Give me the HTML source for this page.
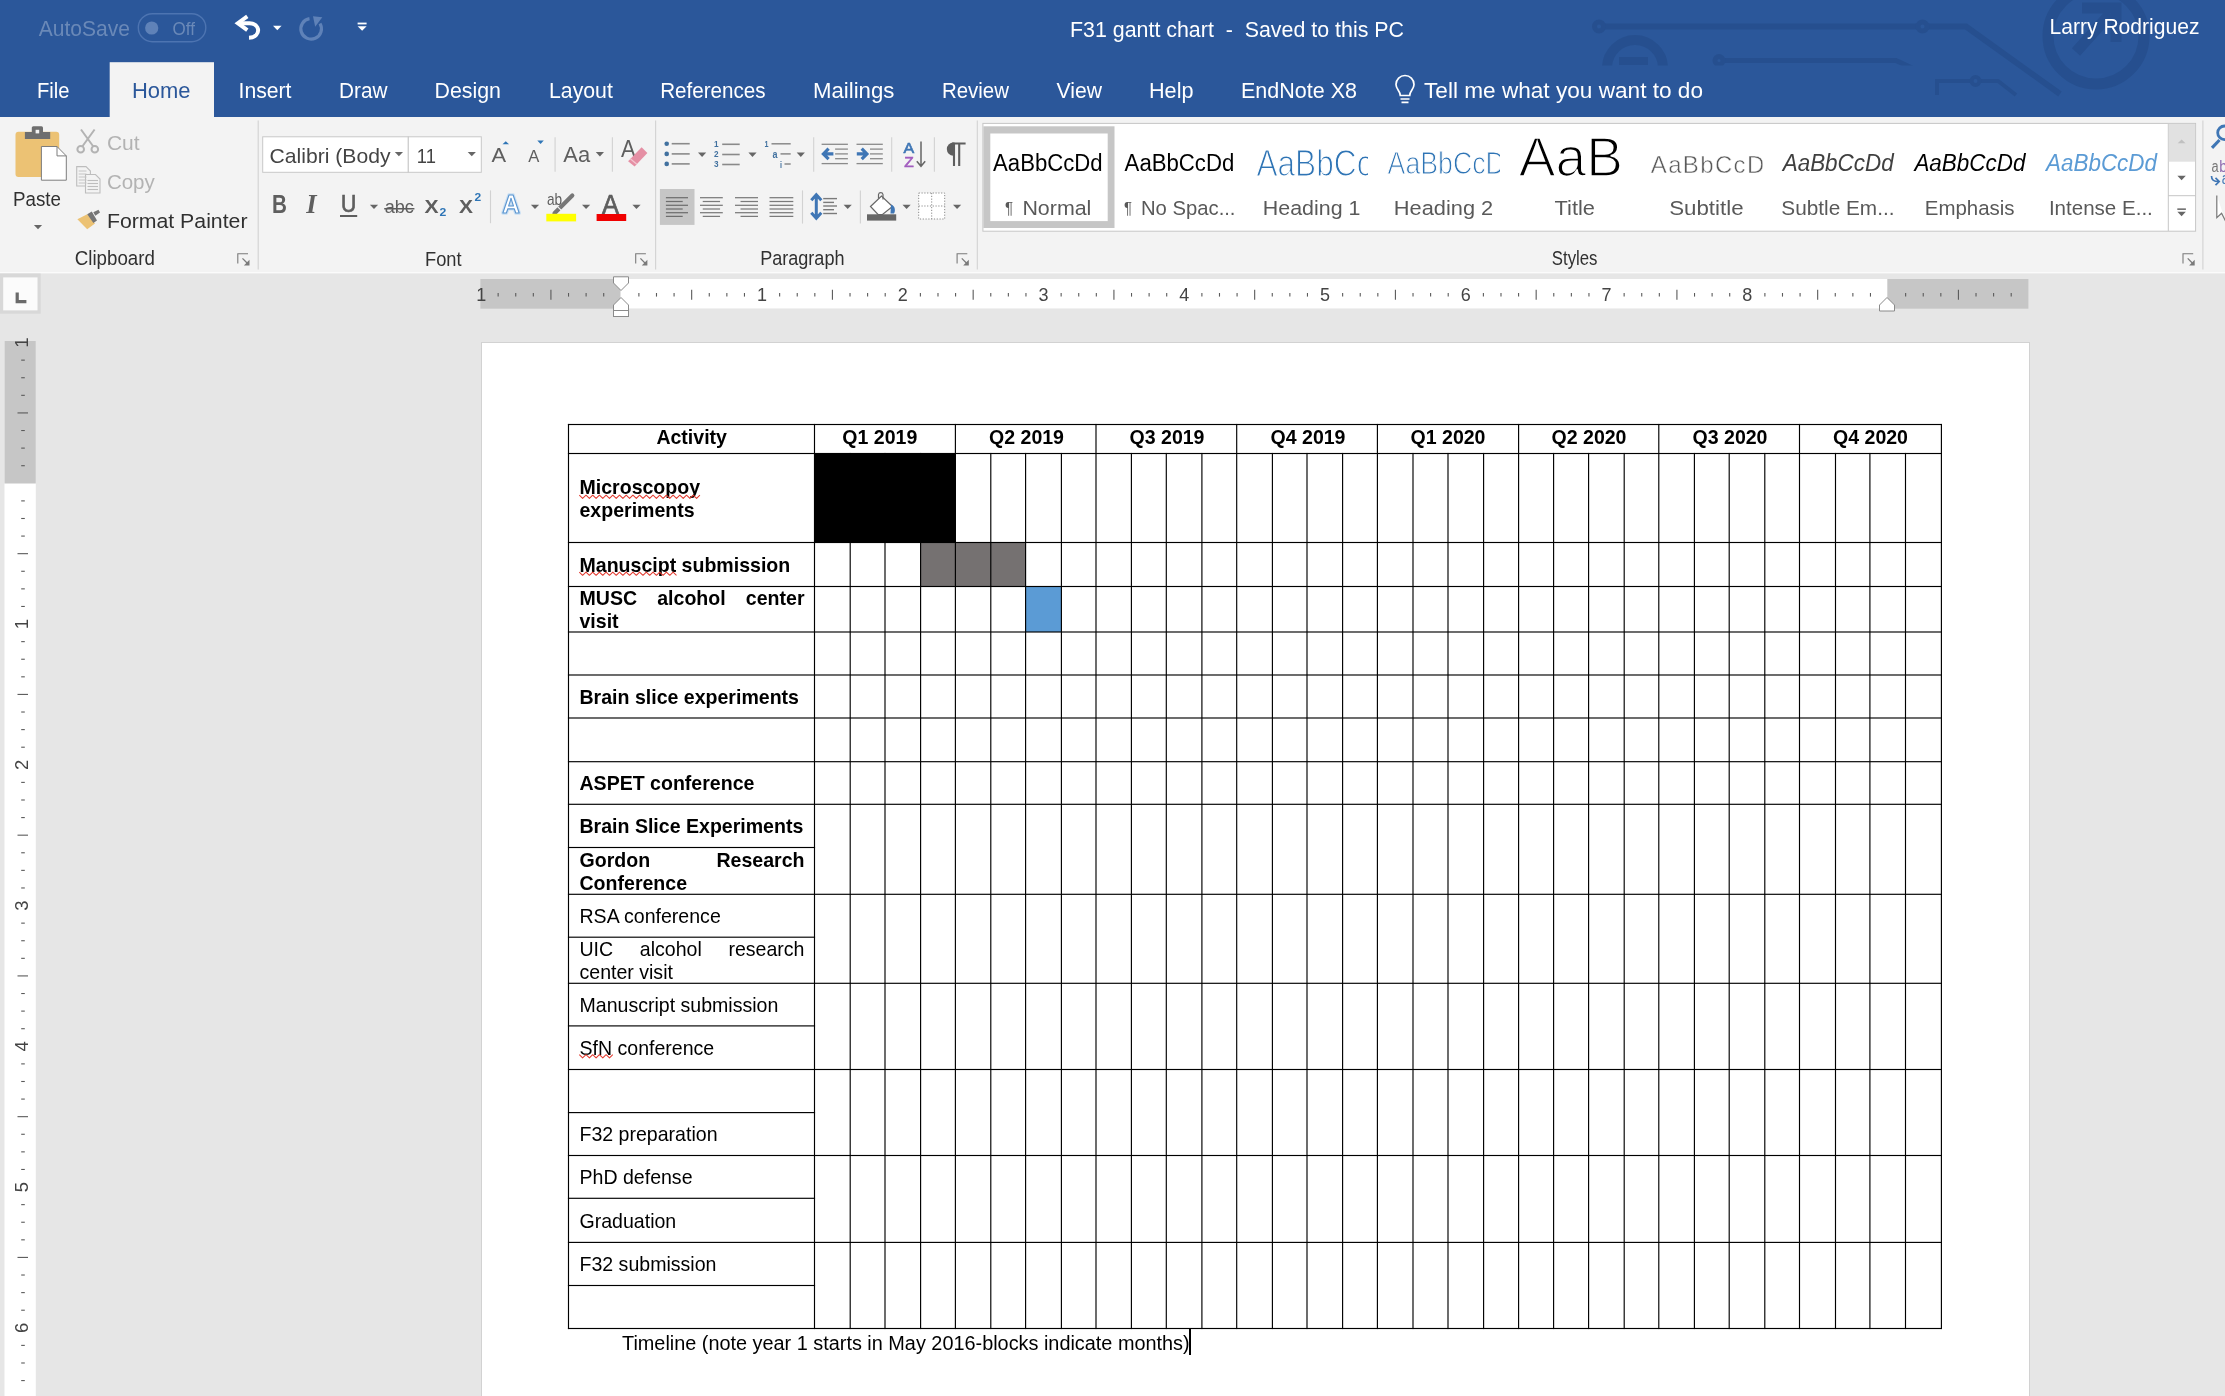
<!DOCTYPE html>
<html><head><meta charset="utf-8"><title>F31 gantt chart - Word</title><style>
html,body{margin:0;padding:0}
body{width:2225px;height:1396px;overflow:hidden;position:relative;background:#e6e6e6;font-family:"Liberation Sans",sans-serif}
#root{position:absolute;left:0;top:0;width:2225px;height:1396px;will-change:transform}
svg{position:absolute;left:0;top:0}
svg text{font-family:"Liberation Sans",sans-serif}
.tx{position:absolute;font-size:19.56px;line-height:22.5px;white-space:nowrap;color:#000}
.b{font-weight:bold}
.cell{position:absolute;left:579.5px;width:225px;display:flex;align-items:center}
.tx2{font-size:19.56px;line-height:22.5px;color:#000;text-align:justify;width:225px}
.sq{}
</style></head>
<body>
<div id="root">
<div style="position:absolute;left:481px;top:342px;width:1548.5px;height:1060px;background:#fff;border:1px solid #d2d2d2;box-sizing:border-box"></div>
<div class="tx b" style="left:591.7px;top:425.7px;width:200px;text-align:center">Activity</div>
<div class="tx b" style="left:779.8px;top:425.7px;width:200px;text-align:center">Q1 2019</div>
<div class="tx b" style="left:926.5px;top:425.7px;width:200px;text-align:center">Q2 2019</div>
<div class="tx b" style="left:1067.0px;top:425.7px;width:200px;text-align:center">Q3 2019</div>
<div class="tx b" style="left:1208.0px;top:425.7px;width:200px;text-align:center">Q4 2019</div>
<div class="tx b" style="left:1348.0px;top:425.7px;width:200px;text-align:center">Q1 2020</div>
<div class="tx b" style="left:1489.0px;top:425.7px;width:200px;text-align:center">Q2 2020</div>
<div class="tx b" style="left:1630.0px;top:425.7px;width:200px;text-align:center">Q3 2020</div>
<div class="tx b" style="left:1770.5px;top:425.7px;width:200px;text-align:center">Q4 2020</div>
<div class="cell" style="top:454.7px;height:88.0px"><div class="tx2 b">Microscopoy<br> experiments</div></div>
<div class="cell" style="top:543.7px;height:43.0px"><div class="tx2 b">Manuscipt submission</div></div>
<div class="cell" style="top:587.7px;height:44.5px"><div class="tx2 b">MUSC alcohol center visit</div></div>
<div class="cell" style="top:676.2px;height:42.0px"><div class="tx2 b">Brain slice experiments</div></div>
<div class="cell" style="top:762.9px;height:41.6px"><div class="tx2 b">ASPET conference</div></div>
<div class="cell" style="top:805.5px;height:42.2px"><div class="tx2 b">Brain Slice Experiments</div></div>
<div class="cell" style="top:848.7px;height:45.8px"><div class="tx2 b">Gordon Research Conference</div></div>
<div class="cell" style="top:895.5px;height:41.9px"><div class="tx2">RSA conference</div></div>
<div class="cell" style="top:938.4px;height:45.1px"><div class="tx2">UIC alcohol research center visit</div></div>
<div class="cell" style="top:984.5px;height:41.6px"><div class="tx2">Manuscript submission</div></div>
<div class="cell" style="top:1027.1px;height:42.6px"><div class="tx2">SfN conference</div></div>
<div class="cell" style="top:1113.8px;height:41.9px"><div class="tx2">F32 preparation</div></div>
<div class="cell" style="top:1156.7px;height:41.8px"><div class="tx2">PhD defense</div></div>
<div class="cell" style="top:1199.5px;height:43.1px"><div class="tx2">Graduation</div></div>
<div class="cell" style="top:1243.6px;height:42.1px"><div class="tx2">F32 submission</div></div>
<div id="cap" style="position:absolute;left:621.5px;top:1333.8px;font-size:19.4px;line-height:1;white-space:nowrap;transform-origin:0 0;transform:scaleX(1.024);color:#000">Timeline (note year 1 starts in May 2016-blocks indicate months)</div>
<div style="position:absolute;left:1189px;top:1329px;width:1.6px;height:26px;background:#000"></div>
<svg width="2225" height="1396" viewBox="0 0 2225 1396">
<rect x="0.00" y="0.00" width="2225.00" height="117.00" fill="#2b579a"/>
<g fill="none" stroke="#264f8e" stroke-width="5" opacity="0.9">
<clipPath id="c1"><rect x="1580" y="0" width="400" height="65.5"/></clipPath>
<path d="M1603 26.5H1918M1927 26.5H1966L2060 94" stroke-width="6"/>
<circle cx="1599" cy="26.5" r="4.5"/><circle cx="1922.5" cy="26.5" r="4.5"/>
<g clip-path="url(#c1)"><circle cx="1635" cy="68" r="28" stroke-width="10"/><path d="M1619 61H1648" stroke-width="8"/>
<path d="M1723 60.5H1896L1912 68"/><circle cx="1719" cy="60.5" r="4"/></g>
<path d="M1937 95V81H1971M1980 81H1998L2016 95" stroke-width="4"/><circle cx="1975.5" cy="81" r="4" stroke-width="4"/>
<clipPath id="c2"><rect x="2030" y="0" width="140" height="117"/></clipPath>
<g clip-path="url(#c2)"><circle cx="2096" cy="36" r="48" stroke-width="11"/>
<path d="M2076 52L2110 14M2082 8H2116V42" stroke-width="11"/></g>
</g>
<text x="38.7" y="36.0" font-size="21.5" textLength="91.2" lengthAdjust="spacingAndGlyphs" fill="#6a89b8">AutoSave</text>
<rect x="138.3" y="13.7" width="67.5" height="28" rx="14" fill="none" stroke="#4d74b1" stroke-width="1.4"/>
<circle cx="151.7" cy="28" r="6.6" fill="#5f82b8"/>
<text x="172.6" y="34.6" font-size="18.5" textLength="22.4" lengthAdjust="spacingAndGlyphs" fill="#6a89b8">Off</text>
<g fill="none" stroke="#fff" stroke-width="3.9" stroke-linecap="butt" stroke-linejoin="miter"><path d="M247.300 16.300L237.800 23.200L247.300 30.100"/><path d="M240 23.200H249.500C257.500 23.200 260.200 30.500 256.200 35C254.300 37 251.500 37.700 249 37.800"/></g>
<path d="M273.00 25.65h8.6l-4.30 4.5z" fill="#fff"/>
<g fill="none" stroke="#5f82b8" stroke-width="3.2"><path d="M309.500 18.600A10.300 10.300 0 1 0 320 23.500"/></g>
<path d="M313 16.200L322.300 17.300L315.200 26.800Z" fill="#5f82b8"/>
<rect x="357.60" y="22.60" width="9.00" height="1.80" fill="#fff"/>
<path d="M357.60 26.20h9l-4.50 4.6z" fill="#fff"/>
<text x="1070.0" y="37.3" font-size="22" textLength="334.0" lengthAdjust="spacingAndGlyphs" fill="#fff">F31 gantt chart  -  Saved to this PC</text>
<text x="2049.5" y="33.8" font-size="22" textLength="150.0" lengthAdjust="spacingAndGlyphs" fill="#fff">Larry Rodriguez</text>
<rect x="109.70" y="62.20" width="104.30" height="56.00" fill="#f3f3f3"/>
<text x="37.0" y="97.8" font-size="22" textLength="32.5" lengthAdjust="spacingAndGlyphs" fill="#fff">File</text>
<text x="132.0" y="97.8" font-size="22" textLength="58.5" lengthAdjust="spacingAndGlyphs" fill="#2b579a">Home</text>
<text x="238.5" y="97.8" font-size="22" textLength="53.0" lengthAdjust="spacingAndGlyphs" fill="#fff">Insert</text>
<text x="339.0" y="97.8" font-size="22" textLength="48.5" lengthAdjust="spacingAndGlyphs" fill="#fff">Draw</text>
<text x="434.5" y="97.8" font-size="22" textLength="66.5" lengthAdjust="spacingAndGlyphs" fill="#fff">Design</text>
<text x="549.0" y="97.8" font-size="22" textLength="63.8" lengthAdjust="spacingAndGlyphs" fill="#fff">Layout</text>
<text x="660.2" y="97.8" font-size="22" textLength="105.4" lengthAdjust="spacingAndGlyphs" fill="#fff">References</text>
<text x="813.0" y="97.8" font-size="22" textLength="81.4" lengthAdjust="spacingAndGlyphs" fill="#fff">Mailings</text>
<text x="942.0" y="97.8" font-size="22" textLength="67.0" lengthAdjust="spacingAndGlyphs" fill="#fff">Review</text>
<text x="1056.5" y="97.8" font-size="22" textLength="45.5" lengthAdjust="spacingAndGlyphs" fill="#fff">View</text>
<text x="1149.0" y="97.8" font-size="22" textLength="44.5" lengthAdjust="spacingAndGlyphs" fill="#fff">Help</text>
<text x="1241.0" y="97.8" font-size="22" textLength="116.0" lengthAdjust="spacingAndGlyphs" fill="#fff">EndNote X8</text>
<text x="1424.0" y="97.8" font-size="22" textLength="279.0" lengthAdjust="spacingAndGlyphs" fill="#fff">Tell me what you want to do</text>
<g fill="none" stroke="#fff" stroke-width="1.7"><path d="M1400.3 95.5C1400.3 91 1396 89.5 1396 84.5A9 9 0 0 1 1414 84.500C1414 89.5 1409.700 91 1409.700 95.5Z"/><path d="M1400.5 99H1409.5M1401.500 102.300H1408.500"/></g>
<rect x="0.00" y="117.00" width="2225.00" height="156.30" fill="#f3f3f3"/>
<rect x="0.00" y="272.00" width="2225.00" height="1.20" fill="#fbfbfb"/>
<line x1="258.20" y1="120.60" x2="258.20" y2="269.50" stroke="#d2d2d2" stroke-width="1.1"/>
<line x1="655.60" y1="120.60" x2="655.60" y2="269.50" stroke="#d2d2d2" stroke-width="1.1"/>
<line x1="977.30" y1="120.60" x2="977.30" y2="269.50" stroke="#d2d2d2" stroke-width="1.1"/>
<line x1="2202.90" y1="120.60" x2="2202.90" y2="269.50" stroke="#d2d2d2" stroke-width="1.1"/>
<rect x="15.5" y="131.8" width="43.7" height="45.2" rx="3" fill="#ecc274"/>
<rect x="24.90" y="132.00" width="25.30" height="7.00" fill="#6e6e6e"/>
<rect x="31.8" y="126.2" width="11.2" height="8" rx="1.5" fill="#6e6e6e"/>
<rect x="35.60" y="129.80" width="3.60" height="3.60" fill="#f3f3f3"/>
<path d="M41.4 146.5H57L66.3 155.9V180.2H41.4Z" fill="#fff" stroke="#7d7d7d" stroke-width="1"/>
<path d="M57 146.5V155.9H66.3" fill="none" stroke="#7d7d7d" stroke-width="1"/>
<text x="13.1" y="206.2" font-size="20.5" textLength="47.9" lengthAdjust="spacingAndGlyphs" fill="#303030">Paste</text>
<path d="M33.90 224.90h8.2l-4.10 4.4z" fill="#666"/>
<g fill="none" stroke="#b3b3b3" stroke-width="2"><path d="M81 129.5L93.3 146.5M94.600 129.5L82.300 146.500"/><circle cx="80.7" cy="149.300" r="3.3"/><circle cx="94.8" cy="149.300" r="3.3"/></g>
<text x="106.9" y="149.5" font-size="20.5" textLength="32.7" lengthAdjust="spacingAndGlyphs" fill="#b3b3b3">Cut</text>
<g fill="#f3f3f3" stroke="#bdbdbd" stroke-width="1.1"><path d="M76.700 166.600H86L90.400 171V186H76.700Z"/><path d="M85.5 174.500H95.5L100 179V193H85.500Z"/></g>
<line x1="78.70" y1="171.00" x2="86.50" y2="171.00" stroke="#c4c4c4" stroke-width="1"/><line x1="78.70" y1="174.00" x2="86.50" y2="174.00" stroke="#c4c4c4" stroke-width="1"/><line x1="78.70" y1="177.00" x2="86.50" y2="177.00" stroke="#c4c4c4" stroke-width="1"/><line x1="78.70" y1="180.00" x2="86.50" y2="180.00" stroke="#c4c4c4" stroke-width="1"/><line x1="78.70" y1="183.00" x2="86.50" y2="183.00" stroke="#c4c4c4" stroke-width="1"/>
<line x1="87.50" y1="180.50" x2="98.00" y2="180.50" stroke="#bdbdbd" stroke-width="1.1"/><line x1="87.50" y1="183.50" x2="98.00" y2="183.50" stroke="#bdbdbd" stroke-width="1.1"/><line x1="87.50" y1="186.50" x2="98.00" y2="186.50" stroke="#bdbdbd" stroke-width="1.1"/><line x1="87.50" y1="189.50" x2="98.00" y2="189.50" stroke="#bdbdbd" stroke-width="1.1"/>
<text x="106.9" y="188.7" font-size="20.5" textLength="47.9" lengthAdjust="spacingAndGlyphs" fill="#b3b3b3">Copy</text>
<path d="M77.4 219.3L87.2 214.2L95 223.6L87.2 229.2Z" fill="#ecc274"/>
<path d="M87.2 214.2L91.8 211.6L97 220.4L93.4 223Z" fill="#757575"/>
<path d="M93.300 212.300L98.500 209.800L100 212.500L95.300 215.700Z" fill="#757575"/>
<text x="106.9" y="227.8" font-size="20.5" textLength="140.6" lengthAdjust="spacingAndGlyphs" fill="#303030">Format Painter</text>
<text x="74.8" y="265.2" font-size="20.5" textLength="80.0" lengthAdjust="spacingAndGlyphs" fill="#303030">Clipboard</text>
<g fill="none" stroke="#7a7a7a" stroke-width="1.1"><path d="M237.8 263.5V253.7H248.0"/><path d="M242.5 258.4L247.3 263.2" stroke-width="1.3"/></g><path d="M249.5 259.8V265.4H243.9Z" fill="#7a7a7a"/>
<rect x="262.7" y="136.8" width="145.6" height="35.5" fill="#fff" stroke="#c8c8c8" stroke-width="1"/>
<rect x="408.3" y="136.8" width="73" height="35.5" fill="#fff" stroke="#c8c8c8" stroke-width="1"/>
<text x="269.6" y="163.0" font-size="20.8" textLength="120.9" lengthAdjust="spacingAndGlyphs" fill="#444">Calibri (Body</text>
<path d="M394.80 151.90h8.2l-4.10 4.4z" fill="#666"/>
<text x="416.8" y="163.0" font-size="20.8" textLength="19.1" lengthAdjust="spacingAndGlyphs" fill="#444">11</text>
<path d="M467.70 151.90h8.2l-4.10 4.4z" fill="#666"/>
<text x="491.4" y="162.4" font-size="21" textLength="14.6" lengthAdjust="spacingAndGlyphs" fill="#5e5e5e">A</text>
<path d="M502.5 144.3L505.75 141.2L509 144.3Z" fill="#2e75b6"/>
<text x="528.2" y="162.4" font-size="15.6" textLength="11.1" lengthAdjust="spacingAndGlyphs" fill="#5e5e5e">A</text>
<path d="M537.3 140.6H543.800L540.55 143.9Z" fill="#2e75b6"/>
<line x1="555.10" y1="137.30" x2="555.10" y2="171.70" stroke="#d2d2d2" stroke-width="1.1"/>
<text x="563.3" y="161.5" font-size="22" textLength="26.9" lengthAdjust="spacingAndGlyphs" fill="#5e5e5e">Aa</text>
<path d="M595.80 152.10h8.2l-4.10 4.4z" fill="#666"/>
<line x1="612.40" y1="137.30" x2="612.40" y2="171.70" stroke="#d2d2d2" stroke-width="1.1"/>
<text x="621.1" y="156.5" font-size="23.5" textLength="14.6" lengthAdjust="spacingAndGlyphs" fill="#5e5e5e">A</text>
<path d="M628.1 161.2L641.6 147.2L647.4 153L634.6 166.5Z" fill="#e58fa4"/>
<line x1="630.30" y1="158.80" x2="636.80" y2="164.30" stroke="#f3c6d0" stroke-width="1.2"/>
<text x="271.9" y="213.2" font-size="25.3" textLength="14.9" lengthAdjust="spacingAndGlyphs" fill="#5e5e5e" font-weight="bold">B</text>
<text x="306.3" y="213.2" font-size="26.5" fill="#5e5e5e" font-weight="bold" font-style="italic" style="font-family:&quot;Liberation Serif&quot;">I</text>
<text x="340.9" y="212.4" font-size="24" textLength="15.3" lengthAdjust="spacingAndGlyphs" fill="#5e5e5e" stroke="#5e5e5e" stroke-width="0.7">U</text>
<rect x="340.00" y="215.00" width="17.20" height="2.00" fill="#5e5e5e"/>
<path d="M369.90 204.70h8.2l-4.10 4.4z" fill="#666"/>
<text x="384.7" y="213.2" font-size="18" textLength="29.2" lengthAdjust="spacingAndGlyphs" fill="#5e5e5e">abc</text>
<rect x="384.20" y="208.00" width="30.20" height="1.50" fill="#5e5e5e"/>
<text x="424.4" y="213.2" font-size="19" textLength="14.1" lengthAdjust="spacingAndGlyphs" fill="#5e5e5e" font-weight="bold">X</text>
<text x="439.6" y="215.9" font-size="11.5" textLength="6.8" lengthAdjust="spacingAndGlyphs" fill="#2e75b6" font-weight="bold">2</text>
<text x="458.9" y="213.2" font-size="19" textLength="14.0" lengthAdjust="spacingAndGlyphs" fill="#5e5e5e" font-weight="bold">X</text>
<text x="474.4" y="200.6" font-size="11.5" textLength="6.7" lengthAdjust="spacingAndGlyphs" fill="#2e75b6" font-weight="bold">2</text>
<line x1="490.50" y1="190.40" x2="490.50" y2="223.20" stroke="#d2d2d2" stroke-width="1.1"/>
<text x="502.2" y="213" font-size="26" font-weight="bold" textLength="17.600" lengthAdjust="spacingAndGlyphs" fill="#fff" stroke="#c9dff3" stroke-width="3.6" stroke-linejoin="round">A</text>
<text x="502.2" y="213" font-size="26" font-weight="bold" textLength="17.600" lengthAdjust="spacingAndGlyphs" fill="#fff" stroke="#5b95d0" stroke-width="1.15" stroke-linejoin="round">A</text>
<path d="M530.90 204.70h8.2l-4.10 4.4z" fill="#666"/>
<text x="546.9" y="204.5" font-size="17" textLength="15.2" lengthAdjust="spacingAndGlyphs" fill="#5e5e5e">ab</text>
<line x1="572.30" y1="195.40" x2="554.50" y2="213.20" stroke="#777" stroke-width="4.2" stroke-linecap="round"/>
<line x1="556.60" y1="205.70" x2="562.00" y2="211.10" stroke="#f3f3f3" stroke-width="1.2"/>
<rect x="546.30" y="213.80" width="29.80" height="7.60" fill="#ffff00"/>
<path d="M582.00 204.70h8.2l-4.10 4.4z" fill="#666"/>
<text x="602.1" y="214.4" font-size="27" textLength="17.0" lengthAdjust="spacingAndGlyphs" fill="#5e5e5e" stroke="#5e5e5e" stroke-width="0.7">A</text>
<rect x="596.60" y="214.00" width="29.60" height="7.00" fill="#f00000"/>
<path d="M632.40 204.70h8.2l-4.10 4.4z" fill="#666"/>
<text x="425.0" y="265.5" font-size="20.5" textLength="36.6" lengthAdjust="spacingAndGlyphs" fill="#303030">Font</text>
<g fill="none" stroke="#7a7a7a" stroke-width="1.1"><path d="M635.7 263.5V253.7H645.9000000000001"/><path d="M640.4000000000001 258.4L645.2 263.2" stroke-width="1.3"/></g><path d="M647.4000000000001 259.8V265.4H641.8000000000001Z" fill="#7a7a7a"/>
<circle cx="666.7" cy="143.7" r="2.3" fill="#41719f"/>
<circle cx="666.7" cy="153.9" r="2.3" fill="#41719f"/>
<circle cx="666.7" cy="163.9" r="2.3" fill="#41719f"/>
<line x1="671.70" y1="143.70" x2="689.70" y2="143.70" stroke="#8a8a8a" stroke-width="1.6"/><line x1="671.70" y1="153.90" x2="689.70" y2="153.90" stroke="#8a8a8a" stroke-width="1.6"/><line x1="671.70" y1="163.90" x2="689.70" y2="163.90" stroke="#8a8a8a" stroke-width="1.6"/>
<path d="M698.00 152.60h8.2l-4.10 4.4z" fill="#666"/>
<text x="714.0" y="146.9" font-size="8.2" fill="#41719f" font-weight="bold">1</text>
<text x="714.0" y="157.2" font-size="8.2" fill="#41719f" font-weight="bold">2</text>
<text x="714.0" y="167.3" font-size="8.2" fill="#41719f" font-weight="bold">3</text>
<line x1="722.20" y1="144.30" x2="739.70" y2="144.30" stroke="#8a8a8a" stroke-width="1.6"/><line x1="722.20" y1="154.50" x2="739.70" y2="154.50" stroke="#8a8a8a" stroke-width="1.6"/><line x1="722.20" y1="164.50" x2="739.70" y2="164.50" stroke="#8a8a8a" stroke-width="1.6"/>
<path d="M748.40 152.60h8.2l-4.10 4.4z" fill="#666"/>
<text x="764.5" y="146.8" font-size="9.5" textLength="4.0" lengthAdjust="spacingAndGlyphs" fill="#41719f" font-weight="bold">1</text>
<text x="772.5" y="157.5" font-size="10.5" textLength="5.0" lengthAdjust="spacingAndGlyphs" fill="#41719f" font-weight="bold">a</text>
<text x="780.0" y="167.5" font-size="9.5" textLength="2.0" lengthAdjust="spacingAndGlyphs" fill="#41719f" font-weight="bold">i</text>
<line x1="771.50" y1="143.80" x2="790.70" y2="143.80" stroke="#8a8a8a" stroke-width="1.5"/>
<line x1="780.50" y1="153.90" x2="790.70" y2="153.90" stroke="#8a8a8a" stroke-width="1.5"/>
<line x1="784.50" y1="164.00" x2="790.70" y2="164.00" stroke="#8a8a8a" stroke-width="1.5"/>
<path d="M796.70 152.60h8.2l-4.10 4.4z" fill="#666"/>
<line x1="813.70" y1="137.30" x2="813.70" y2="171.70" stroke="#d2d2d2" stroke-width="1.1"/>
<line x1="821.60" y1="144.30" x2="847.90" y2="144.30" stroke="#8a8a8a" stroke-width="1.3"/><line x1="821.60" y1="163.60" x2="847.90" y2="163.60" stroke="#8a8a8a" stroke-width="1.3"/><line x1="835.10" y1="149.10" x2="847.90" y2="149.10" stroke="#8a8a8a" stroke-width="1.3"/><line x1="835.10" y1="153.90" x2="847.90" y2="153.90" stroke="#8a8a8a" stroke-width="1.3"/><line x1="835.10" y1="158.70" x2="847.90" y2="158.70" stroke="#8a8a8a" stroke-width="1.3"/><path d="M833.4 153.9H824.6M828.6 148.6L823.4 153.9L828.6 159.2" fill="none" stroke="#3f76b5" stroke-width="3.2"/>
<line x1="856.50" y1="144.30" x2="882.80" y2="144.30" stroke="#8a8a8a" stroke-width="1.3"/><line x1="856.50" y1="163.60" x2="882.80" y2="163.60" stroke="#8a8a8a" stroke-width="1.3"/><line x1="870.00" y1="149.10" x2="882.80" y2="149.10" stroke="#8a8a8a" stroke-width="1.3"/><line x1="870.00" y1="153.90" x2="882.80" y2="153.90" stroke="#8a8a8a" stroke-width="1.3"/><line x1="870.00" y1="158.70" x2="882.80" y2="158.70" stroke="#8a8a8a" stroke-width="1.3"/><path d="M856.8 153.9H865.7M861.7 148.6L866.9 153.9L861.7 159.2" fill="none" stroke="#3f76b5" stroke-width="3.2"/>
<line x1="891.70" y1="137.30" x2="891.70" y2="171.70" stroke="#d2d2d2" stroke-width="1.1"/>
<text x="903.6" y="153.0" font-size="15" textLength="10.7" lengthAdjust="spacingAndGlyphs" fill="#3f76b5" stroke="#3f76b5" stroke-width="0.6">A</text>
<text x="904.3" y="166.5" font-size="15" textLength="9.5" lengthAdjust="spacingAndGlyphs" fill="#a25cbf" stroke="#a25cbf" stroke-width="0.6">Z</text>
<path d="M921 141.5V166M916.8 161.3L921 166.3L925.200 161.300" fill="none" stroke="#666" stroke-width="1.5"/>
<line x1="934.40" y1="137.30" x2="934.40" y2="171.70" stroke="#d2d2d2" stroke-width="1.1"/>
<path d="M952 143.500H965.600M954 143V166M959.200 143V166" fill="none" stroke="#5e5e5e" stroke-width="2.1"/>
<path d="M954.5 142.5H953.300A6.500 6.600 0 0 0 953.300 155.700H954.500Z" fill="#5e5e5e"/>
<rect x="659.90" y="189.00" width="34.60" height="35.90" fill="#c6c6c6"/>
<line x1="665.90" y1="197.70" x2="688.00" y2="197.70" stroke="#6e6e6e" stroke-width="1.25"/><line x1="665.90" y1="201.50" x2="682.70" y2="201.50" stroke="#6e6e6e" stroke-width="1.25"/><line x1="665.90" y1="205.30" x2="688.00" y2="205.30" stroke="#6e6e6e" stroke-width="1.25"/><line x1="665.90" y1="209.00" x2="682.70" y2="209.00" stroke="#6e6e6e" stroke-width="1.25"/><line x1="665.90" y1="212.70" x2="688.00" y2="212.70" stroke="#6e6e6e" stroke-width="1.25"/><line x1="665.90" y1="216.40" x2="682.70" y2="216.40" stroke="#6e6e6e" stroke-width="1.25"/>
<line x1="700.00" y1="197.70" x2="722.80" y2="197.70" stroke="#7a7a7a" stroke-width="1.25"/><line x1="702.74" y1="201.50" x2="720.06" y2="201.50" stroke="#7a7a7a" stroke-width="1.25"/><line x1="700.00" y1="205.30" x2="722.80" y2="205.30" stroke="#7a7a7a" stroke-width="1.25"/><line x1="702.74" y1="209.00" x2="720.06" y2="209.00" stroke="#7a7a7a" stroke-width="1.25"/><line x1="700.00" y1="212.70" x2="722.80" y2="212.70" stroke="#7a7a7a" stroke-width="1.25"/><line x1="702.74" y1="216.40" x2="720.06" y2="216.40" stroke="#7a7a7a" stroke-width="1.25"/>
<line x1="735.00" y1="197.70" x2="758.00" y2="197.70" stroke="#7a7a7a" stroke-width="1.25"/><line x1="740.52" y1="201.50" x2="758.00" y2="201.50" stroke="#7a7a7a" stroke-width="1.25"/><line x1="735.00" y1="205.30" x2="758.00" y2="205.30" stroke="#7a7a7a" stroke-width="1.25"/><line x1="740.52" y1="209.00" x2="758.00" y2="209.00" stroke="#7a7a7a" stroke-width="1.25"/><line x1="735.00" y1="212.70" x2="758.00" y2="212.70" stroke="#7a7a7a" stroke-width="1.25"/><line x1="740.52" y1="216.40" x2="758.00" y2="216.40" stroke="#7a7a7a" stroke-width="1.25"/>
<line x1="769.50" y1="197.70" x2="793.30" y2="197.70" stroke="#7a7a7a" stroke-width="1.25"/><line x1="769.50" y1="201.50" x2="793.30" y2="201.50" stroke="#7a7a7a" stroke-width="1.25"/><line x1="769.50" y1="205.30" x2="793.30" y2="205.30" stroke="#7a7a7a" stroke-width="1.25"/><line x1="769.50" y1="209.00" x2="793.30" y2="209.00" stroke="#7a7a7a" stroke-width="1.25"/><line x1="769.50" y1="212.70" x2="793.30" y2="212.70" stroke="#7a7a7a" stroke-width="1.25"/><line x1="769.50" y1="216.40" x2="793.30" y2="216.40" stroke="#7a7a7a" stroke-width="1.25"/>
<line x1="802.50" y1="190.40" x2="802.50" y2="223.60" stroke="#d2d2d2" stroke-width="1.1"/>
<path d="M816.300 196V217M811.300 200.300L816.300 194.800L821.300 200.300M811.300 212.800L816.300 218.300L821.300 212.800" fill="none" stroke="#3f76b5" stroke-width="3"/>
<line x1="823.20" y1="198.60" x2="837.00" y2="198.60" stroke="#7a7a7a" stroke-width="1.4"/><line x1="823.20" y1="206.00" x2="837.00" y2="206.00" stroke="#7a7a7a" stroke-width="1.4"/><line x1="823.20" y1="213.50" x2="837.00" y2="213.50" stroke="#7a7a7a" stroke-width="1.4"/>
<line x1="823.20" y1="202.40" x2="834.00" y2="202.40" stroke="#7a7a7a" stroke-width="1.4"/><line x1="823.20" y1="209.70" x2="834.00" y2="209.70" stroke="#7a7a7a" stroke-width="1.4"/>
<path d="M843.60 204.70h8.2l-4.10 4.4z" fill="#666"/>
<line x1="860.40" y1="190.40" x2="860.40" y2="223.60" stroke="#d2d2d2" stroke-width="1.1"/>
<path d="M870.500 206.5L881.500 196L892.500 206.500L882.500 214.5H878Z" fill="#fff" stroke="#666" stroke-width="1.2"/>
<path d="M878.500 198.500V194.500A2.300 2.300 0 0 1 883 194.500V199.500" fill="none" stroke="#666" stroke-width="1.2"/>
<path d="M891 204.500C895.500 206 895.500 211 894 213.5H890.500Z" fill="#3f76b5"/>
<rect x="867.00" y="214.30" width="29.20" height="6.30" fill="#666"/>
<path d="M902.50 204.70h8.2l-4.10 4.4z" fill="#666"/>
<rect x="918.7" y="193" width="26" height="26" fill="#fff" stroke="#8a8a8a" stroke-width="1" stroke-dasharray="1.2 1.6"/>
<line x1="931.70" y1="193.00" x2="931.70" y2="219.00" stroke="#8a8a8a" stroke-width="1" stroke-dasharray="1.2 1.6"/>
<line x1="918.70" y1="206.00" x2="944.70" y2="206.00" stroke="#8a8a8a" stroke-width="1" stroke-dasharray="1.2 1.6"/>
<path d="M953.00 204.70h8.2l-4.10 4.4z" fill="#666"/>
<text x="760.2" y="265.2" font-size="20.5" textLength="84.3" lengthAdjust="spacingAndGlyphs" fill="#303030">Paragraph</text>
<g fill="none" stroke="#7a7a7a" stroke-width="1.1"><path d="M957.1 263.5V253.7H967.3000000000001"/><path d="M961.8000000000001 258.4L966.6 263.2" stroke-width="1.3"/></g><path d="M968.8000000000001 259.8V265.4H963.2Z" fill="#7a7a7a"/>
<rect x="982.9" y="123.4" width="1212.7" height="107.8" fill="#fff" stroke="#c6c6c6" stroke-width="1"/>
<rect x="983.40" y="126.30" width="131.10" height="101.70" fill="#c6c6c6"/>
<rect x="990.30" y="133.50" width="117.40" height="87.60" fill="#fff"/>
<text x="993.1" y="171.4" font-size="23" textLength="109.4" lengthAdjust="spacingAndGlyphs" fill="#000">AaBbCcDd</text>
<text x="1004.9" y="213.6" font-size="17" textLength="8.1" lengthAdjust="spacingAndGlyphs" fill="#595959">¶</text>
<text x="1022.4" y="215.3" font-size="20.5" textLength="69.0" lengthAdjust="spacingAndGlyphs" fill="#595959">Normal</text>
<text x="1124.6" y="171.4" font-size="23" textLength="109.7" lengthAdjust="spacingAndGlyphs" fill="#000">AaBbCcDd</text>
<text x="1124.0" y="213.6" font-size="17" textLength="8.0" lengthAdjust="spacingAndGlyphs" fill="#595959">¶</text>
<text x="1141.0" y="215.3" font-size="20.5" textLength="94.5" lengthAdjust="spacingAndGlyphs" fill="#595959">No Spac...</text>
<clipPath id="h1c"><rect x="1250" y="130" width="118" height="60"/></clipPath>
<g clip-path="url(#h1c)"><text x="1256.4" y="175.8" font-size="36.5" textLength="116.1" lengthAdjust="spacingAndGlyphs" fill="#2e74b5" stroke="#fff" stroke-width="1.2" paint-order="fill stroke">AaBbCc</text></g>
<text x="1262.8" y="215.3" font-size="20.5" textLength="97.7" lengthAdjust="spacingAndGlyphs" fill="#595959">Heading 1</text>
<clipPath id="h2c"><rect x="1380" y="130" width="120" height="60"/></clipPath>
<g clip-path="url(#h2c)"><text x="1387.6" y="173.8" font-size="30.5" textLength="117.2" lengthAdjust="spacingAndGlyphs" fill="#2e74b5" stroke="#fff" stroke-width="1.0" paint-order="fill stroke">AaBbCcD</text></g>
<text x="1393.8" y="215.3" font-size="20.5" textLength="99.4" lengthAdjust="spacingAndGlyphs" fill="#595959">Heading 2</text>
<text x="1518.8" y="175.5" font-size="55" textLength="104.2" lengthAdjust="spacingAndGlyphs" fill="#000" stroke="#fff" stroke-width="1.7" paint-order="fill stroke">AaB</text>
<text x="1554.6" y="215.3" font-size="20.5" textLength="40.4" lengthAdjust="spacingAndGlyphs" fill="#595959">Title</text>
<clipPath id="stc"><rect x="1645" y="130" width="117.500" height="60"/></clipPath>
<g clip-path="url(#stc)"><text x="1650.8" y="172.5" font-size="24" textLength="128.2" lengthAdjust="spacing" fill="#5a5a5a" stroke="#fff" stroke-width="0.5" paint-order="fill stroke">AaBbCcDd</text></g>
<text x="1669.2" y="215.3" font-size="20.5" textLength="74.4" lengthAdjust="spacingAndGlyphs" fill="#595959">Subtitle</text>
<text x="1782.7" y="171.4" font-size="23" textLength="111.0" lengthAdjust="spacingAndGlyphs" fill="#404040" font-style="italic">AaBbCcDd</text>
<text x="1781.3" y="215.3" font-size="20.5" textLength="113.2" lengthAdjust="spacingAndGlyphs" fill="#595959">Subtle Em...</text>
<text x="1914.4" y="171.4" font-size="23" textLength="111.0" lengthAdjust="spacingAndGlyphs" fill="#000" font-style="italic">AaBbCcDd</text>
<text x="1924.8" y="215.3" font-size="20.5" textLength="89.8" lengthAdjust="spacingAndGlyphs" fill="#595959">Emphasis</text>
<text x="2046.0" y="171.4" font-size="23" textLength="111.0" lengthAdjust="spacingAndGlyphs" fill="#5b9bd5" font-style="italic">AaBbCcDd</text>
<text x="2048.9" y="215.3" font-size="20.5" textLength="103.9" lengthAdjust="spacingAndGlyphs" fill="#595959">Intense E...</text>
<line x1="2168.30" y1="124.00" x2="2168.30" y2="231.00" stroke="#c6c6c6" stroke-width="1"/>
<rect x="2168.80" y="123.90" width="26.30" height="37.80" fill="#e1e1e1"/>
<path d="M2177.7 143.2L2181.600 139.400L2185.500 143.200Z" fill="#c0c0c0"/>
<path d="M2177.40 175.80h8.4l-4.20 4.4z" fill="#666"/>
<line x1="2168.30" y1="195.70" x2="2195.50" y2="195.70" stroke="#c6c6c6" stroke-width="1"/>
<rect x="2177.30" y="208.40" width="8.60" height="1.50" fill="#666"/>
<path d="M2177.40 211.80h8.4l-4.20 4.4z" fill="#666"/>
<text x="1551.8" y="265.2" font-size="20.5" textLength="45.7" lengthAdjust="spacingAndGlyphs" fill="#303030">Styles</text>
<g fill="none" stroke="#7a7a7a" stroke-width="1.1"><path d="M2183.0 263.5V253.7H2193.2"/><path d="M2187.7 258.4L2192.5 263.2" stroke-width="1.3"/></g><path d="M2194.7 259.8V265.4H2189.1Z" fill="#7a7a7a"/>
<g fill="none" stroke="#3f76b5" stroke-width="2.8"><circle cx="2224.500" cy="132.800" r="6.800"/><path d="M2219.500 140L2212 147.800" stroke-width="3.200"/></g>
<text x="2211.4" y="172.3" font-size="16" textLength="7.1" lengthAdjust="spacingAndGlyphs" fill="#777">a</text>
<text x="2219.2" y="172.3" font-size="16" textLength="7.8" lengthAdjust="spacingAndGlyphs" fill="#8e6bb0">b</text>
<path d="M2211.500 176C2211.500 180.500 2214 181.500 2218.500 181.500M2215.500 177.800L2219.200 181.500L2215.500 185.200" fill="none" stroke="#3f76b5" stroke-width="1.7"/>
<text x="2221.8" y="184.2" font-size="16" textLength="7.2" lengthAdjust="spacingAndGlyphs" fill="#3f76b5">a</text>
<path d="M2216.800 195.500V217.600L2221.600 213.200L2225.500 221" fill="#fff" stroke="#777" stroke-width="1.2"/>
<rect x="0.00" y="273.50" width="40.70" height="40.20" fill="#d8d8d8"/>
<rect x="3.20" y="277.40" width="34.30" height="33.00" fill="#fbfbfb"/>
<path d="M17.2 292.600V301.650H26.400" fill="none" stroke="#6a6a6a" stroke-width="3.2"/>
<rect x="480.40" y="279.00" width="1548.00" height="29.70" fill="#c6c6c6"/>
<rect x="620.50" y="279.00" width="1266.80" height="29.70" fill="#fff"/>
<line x1="498.14" y1="293.00" x2="498.14" y2="296.60" stroke="#5a5a5a" stroke-width="1.1"/>
<line x1="515.74" y1="293.00" x2="515.74" y2="296.60" stroke="#5a5a5a" stroke-width="1.1"/>
<line x1="533.33" y1="293.00" x2="533.33" y2="296.60" stroke="#5a5a5a" stroke-width="1.1"/>
<line x1="550.92" y1="289.70" x2="550.92" y2="299.70" stroke="#5a5a5a" stroke-width="1.1"/>
<line x1="568.52" y1="293.00" x2="568.52" y2="296.60" stroke="#5a5a5a" stroke-width="1.1"/>
<line x1="586.11" y1="293.00" x2="586.11" y2="296.60" stroke="#5a5a5a" stroke-width="1.1"/>
<line x1="603.71" y1="293.00" x2="603.71" y2="296.60" stroke="#5a5a5a" stroke-width="1.1"/>
<line x1="638.89" y1="293.00" x2="638.89" y2="296.60" stroke="#5a5a5a" stroke-width="1.1"/>
<line x1="656.49" y1="293.00" x2="656.49" y2="296.60" stroke="#5a5a5a" stroke-width="1.1"/>
<line x1="674.08" y1="293.00" x2="674.08" y2="296.60" stroke="#5a5a5a" stroke-width="1.1"/>
<line x1="691.67" y1="289.70" x2="691.67" y2="299.70" stroke="#5a5a5a" stroke-width="1.1"/>
<line x1="709.27" y1="293.00" x2="709.27" y2="296.60" stroke="#5a5a5a" stroke-width="1.1"/>
<line x1="726.86" y1="293.00" x2="726.86" y2="296.60" stroke="#5a5a5a" stroke-width="1.1"/>
<line x1="744.46" y1="293.00" x2="744.46" y2="296.60" stroke="#5a5a5a" stroke-width="1.1"/>
<line x1="779.64" y1="293.00" x2="779.64" y2="296.60" stroke="#5a5a5a" stroke-width="1.1"/>
<line x1="797.24" y1="293.00" x2="797.24" y2="296.60" stroke="#5a5a5a" stroke-width="1.1"/>
<line x1="814.83" y1="293.00" x2="814.83" y2="296.60" stroke="#5a5a5a" stroke-width="1.1"/>
<line x1="832.42" y1="289.70" x2="832.42" y2="299.70" stroke="#5a5a5a" stroke-width="1.1"/>
<line x1="850.02" y1="293.00" x2="850.02" y2="296.60" stroke="#5a5a5a" stroke-width="1.1"/>
<line x1="867.61" y1="293.00" x2="867.61" y2="296.60" stroke="#5a5a5a" stroke-width="1.1"/>
<line x1="885.21" y1="293.00" x2="885.21" y2="296.60" stroke="#5a5a5a" stroke-width="1.1"/>
<line x1="920.39" y1="293.00" x2="920.39" y2="296.60" stroke="#5a5a5a" stroke-width="1.1"/>
<line x1="937.99" y1="293.00" x2="937.99" y2="296.60" stroke="#5a5a5a" stroke-width="1.1"/>
<line x1="955.58" y1="293.00" x2="955.58" y2="296.60" stroke="#5a5a5a" stroke-width="1.1"/>
<line x1="973.17" y1="289.70" x2="973.17" y2="299.70" stroke="#5a5a5a" stroke-width="1.1"/>
<line x1="990.77" y1="293.00" x2="990.77" y2="296.60" stroke="#5a5a5a" stroke-width="1.1"/>
<line x1="1008.36" y1="293.00" x2="1008.36" y2="296.60" stroke="#5a5a5a" stroke-width="1.1"/>
<line x1="1025.96" y1="293.00" x2="1025.96" y2="296.60" stroke="#5a5a5a" stroke-width="1.1"/>
<line x1="1061.14" y1="293.00" x2="1061.14" y2="296.60" stroke="#5a5a5a" stroke-width="1.1"/>
<line x1="1078.74" y1="293.00" x2="1078.74" y2="296.60" stroke="#5a5a5a" stroke-width="1.1"/>
<line x1="1096.33" y1="293.00" x2="1096.33" y2="296.60" stroke="#5a5a5a" stroke-width="1.1"/>
<line x1="1113.92" y1="289.70" x2="1113.92" y2="299.70" stroke="#5a5a5a" stroke-width="1.1"/>
<line x1="1131.52" y1="293.00" x2="1131.52" y2="296.60" stroke="#5a5a5a" stroke-width="1.1"/>
<line x1="1149.11" y1="293.00" x2="1149.11" y2="296.60" stroke="#5a5a5a" stroke-width="1.1"/>
<line x1="1166.71" y1="293.00" x2="1166.71" y2="296.60" stroke="#5a5a5a" stroke-width="1.1"/>
<line x1="1201.89" y1="293.00" x2="1201.89" y2="296.60" stroke="#5a5a5a" stroke-width="1.1"/>
<line x1="1219.49" y1="293.00" x2="1219.49" y2="296.60" stroke="#5a5a5a" stroke-width="1.1"/>
<line x1="1237.08" y1="293.00" x2="1237.08" y2="296.60" stroke="#5a5a5a" stroke-width="1.1"/>
<line x1="1254.67" y1="289.70" x2="1254.67" y2="299.70" stroke="#5a5a5a" stroke-width="1.1"/>
<line x1="1272.27" y1="293.00" x2="1272.27" y2="296.60" stroke="#5a5a5a" stroke-width="1.1"/>
<line x1="1289.86" y1="293.00" x2="1289.86" y2="296.60" stroke="#5a5a5a" stroke-width="1.1"/>
<line x1="1307.46" y1="293.00" x2="1307.46" y2="296.60" stroke="#5a5a5a" stroke-width="1.1"/>
<line x1="1342.64" y1="293.00" x2="1342.64" y2="296.60" stroke="#5a5a5a" stroke-width="1.1"/>
<line x1="1360.24" y1="293.00" x2="1360.24" y2="296.60" stroke="#5a5a5a" stroke-width="1.1"/>
<line x1="1377.83" y1="293.00" x2="1377.83" y2="296.60" stroke="#5a5a5a" stroke-width="1.1"/>
<line x1="1395.42" y1="289.70" x2="1395.42" y2="299.70" stroke="#5a5a5a" stroke-width="1.1"/>
<line x1="1413.02" y1="293.00" x2="1413.02" y2="296.60" stroke="#5a5a5a" stroke-width="1.1"/>
<line x1="1430.61" y1="293.00" x2="1430.61" y2="296.60" stroke="#5a5a5a" stroke-width="1.1"/>
<line x1="1448.21" y1="293.00" x2="1448.21" y2="296.60" stroke="#5a5a5a" stroke-width="1.1"/>
<line x1="1483.39" y1="293.00" x2="1483.39" y2="296.60" stroke="#5a5a5a" stroke-width="1.1"/>
<line x1="1500.99" y1="293.00" x2="1500.99" y2="296.60" stroke="#5a5a5a" stroke-width="1.1"/>
<line x1="1518.58" y1="293.00" x2="1518.58" y2="296.60" stroke="#5a5a5a" stroke-width="1.1"/>
<line x1="1536.17" y1="289.70" x2="1536.17" y2="299.70" stroke="#5a5a5a" stroke-width="1.1"/>
<line x1="1553.77" y1="293.00" x2="1553.77" y2="296.60" stroke="#5a5a5a" stroke-width="1.1"/>
<line x1="1571.36" y1="293.00" x2="1571.36" y2="296.60" stroke="#5a5a5a" stroke-width="1.1"/>
<line x1="1588.96" y1="293.00" x2="1588.96" y2="296.60" stroke="#5a5a5a" stroke-width="1.1"/>
<line x1="1624.14" y1="293.00" x2="1624.14" y2="296.60" stroke="#5a5a5a" stroke-width="1.1"/>
<line x1="1641.74" y1="293.00" x2="1641.74" y2="296.60" stroke="#5a5a5a" stroke-width="1.1"/>
<line x1="1659.33" y1="293.00" x2="1659.33" y2="296.60" stroke="#5a5a5a" stroke-width="1.1"/>
<line x1="1676.92" y1="289.70" x2="1676.92" y2="299.70" stroke="#5a5a5a" stroke-width="1.1"/>
<line x1="1694.52" y1="293.00" x2="1694.52" y2="296.60" stroke="#5a5a5a" stroke-width="1.1"/>
<line x1="1712.11" y1="293.00" x2="1712.11" y2="296.60" stroke="#5a5a5a" stroke-width="1.1"/>
<line x1="1729.71" y1="293.00" x2="1729.71" y2="296.60" stroke="#5a5a5a" stroke-width="1.1"/>
<line x1="1764.89" y1="293.00" x2="1764.89" y2="296.60" stroke="#5a5a5a" stroke-width="1.1"/>
<line x1="1782.49" y1="293.00" x2="1782.49" y2="296.60" stroke="#5a5a5a" stroke-width="1.1"/>
<line x1="1800.08" y1="293.00" x2="1800.08" y2="296.60" stroke="#5a5a5a" stroke-width="1.1"/>
<line x1="1817.67" y1="289.70" x2="1817.67" y2="299.70" stroke="#5a5a5a" stroke-width="1.1"/>
<line x1="1835.27" y1="293.00" x2="1835.27" y2="296.60" stroke="#5a5a5a" stroke-width="1.1"/>
<line x1="1852.86" y1="293.00" x2="1852.86" y2="296.60" stroke="#5a5a5a" stroke-width="1.1"/>
<line x1="1870.46" y1="293.00" x2="1870.46" y2="296.60" stroke="#5a5a5a" stroke-width="1.1"/>
<line x1="1905.64" y1="293.00" x2="1905.64" y2="296.60" stroke="#5a5a5a" stroke-width="1.1"/>
<line x1="1923.24" y1="293.00" x2="1923.24" y2="296.60" stroke="#5a5a5a" stroke-width="1.1"/>
<line x1="1940.83" y1="293.00" x2="1940.83" y2="296.60" stroke="#5a5a5a" stroke-width="1.1"/>
<line x1="1958.42" y1="289.70" x2="1958.42" y2="299.70" stroke="#5a5a5a" stroke-width="1.1"/>
<line x1="1976.02" y1="293.00" x2="1976.02" y2="296.60" stroke="#5a5a5a" stroke-width="1.1"/>
<line x1="1993.61" y1="293.00" x2="1993.61" y2="296.60" stroke="#5a5a5a" stroke-width="1.1"/>
<line x1="2011.21" y1="293.00" x2="2011.21" y2="296.60" stroke="#5a5a5a" stroke-width="1.1"/>
<text x="476.2" y="301.0" font-size="18" fill="#444">1</text>
<text x="762.0" y="301" font-size="18" fill="#444" text-anchor="middle">1</text>
<text x="902.8" y="301" font-size="18" fill="#444" text-anchor="middle">2</text>
<text x="1043.5" y="301" font-size="18" fill="#444" text-anchor="middle">3</text>
<text x="1184.3" y="301" font-size="18" fill="#444" text-anchor="middle">4</text>
<text x="1325.0" y="301" font-size="18" fill="#444" text-anchor="middle">5</text>
<text x="1465.8" y="301" font-size="18" fill="#444" text-anchor="middle">6</text>
<text x="1606.5" y="301" font-size="18" fill="#444" text-anchor="middle">7</text>
<text x="1747.3" y="301" font-size="18" fill="#444" text-anchor="middle">8</text>
<path d="M613.5 276.800H628.500V283L621 290.500L613.500 283Z" fill="#fff" stroke="#8a8a8a" stroke-width="1"/>
<path d="M613.5 310.500V305L621 297.500L628.500 305V310.500Z" fill="#fff" stroke="#8a8a8a" stroke-width="1"/>
<rect x="613.5" y="310.500" width="15" height="6"  fill="#fff" stroke="#8a8a8a" stroke-width="1"/>
<path d="M1879.5 311V305L1887 297.500L1894.500 305V311Z" fill="#fff" stroke="#8a8a8a" stroke-width="1"/>
<rect x="4.50" y="341.00" width="31.30" height="1055.00" fill="#fff"/>
<rect x="4.50" y="341.00" width="31.30" height="142.50" fill="#c6c6c6"/>
<line x1="21.20" y1="360.14" x2="24.80" y2="360.14" stroke="#5a5a5a" stroke-width="1.1"/>
<line x1="21.20" y1="377.74" x2="24.80" y2="377.74" stroke="#5a5a5a" stroke-width="1.1"/>
<line x1="21.20" y1="395.33" x2="24.80" y2="395.33" stroke="#5a5a5a" stroke-width="1.1"/>
<line x1="17.50" y1="412.93" x2="28.00" y2="412.93" stroke="#5a5a5a" stroke-width="1.1"/>
<line x1="21.20" y1="430.52" x2="24.80" y2="430.52" stroke="#5a5a5a" stroke-width="1.1"/>
<line x1="21.20" y1="448.11" x2="24.80" y2="448.11" stroke="#5a5a5a" stroke-width="1.1"/>
<line x1="21.20" y1="465.71" x2="24.80" y2="465.71" stroke="#5a5a5a" stroke-width="1.1"/>
<line x1="21.20" y1="500.89" x2="24.80" y2="500.89" stroke="#5a5a5a" stroke-width="1.1"/>
<line x1="21.20" y1="518.49" x2="24.80" y2="518.49" stroke="#5a5a5a" stroke-width="1.1"/>
<line x1="21.20" y1="536.08" x2="24.80" y2="536.08" stroke="#5a5a5a" stroke-width="1.1"/>
<line x1="17.50" y1="553.67" x2="28.00" y2="553.67" stroke="#5a5a5a" stroke-width="1.1"/>
<line x1="21.20" y1="571.27" x2="24.80" y2="571.27" stroke="#5a5a5a" stroke-width="1.1"/>
<line x1="21.20" y1="588.86" x2="24.80" y2="588.86" stroke="#5a5a5a" stroke-width="1.1"/>
<line x1="21.20" y1="606.46" x2="24.80" y2="606.46" stroke="#5a5a5a" stroke-width="1.1"/>
<line x1="21.20" y1="641.64" x2="24.80" y2="641.64" stroke="#5a5a5a" stroke-width="1.1"/>
<line x1="21.20" y1="659.24" x2="24.80" y2="659.24" stroke="#5a5a5a" stroke-width="1.1"/>
<line x1="21.20" y1="676.83" x2="24.80" y2="676.83" stroke="#5a5a5a" stroke-width="1.1"/>
<line x1="17.50" y1="694.42" x2="28.00" y2="694.42" stroke="#5a5a5a" stroke-width="1.1"/>
<line x1="21.20" y1="712.02" x2="24.80" y2="712.02" stroke="#5a5a5a" stroke-width="1.1"/>
<line x1="21.20" y1="729.61" x2="24.80" y2="729.61" stroke="#5a5a5a" stroke-width="1.1"/>
<line x1="21.20" y1="747.21" x2="24.80" y2="747.21" stroke="#5a5a5a" stroke-width="1.1"/>
<line x1="21.20" y1="782.39" x2="24.80" y2="782.39" stroke="#5a5a5a" stroke-width="1.1"/>
<line x1="21.20" y1="799.99" x2="24.80" y2="799.99" stroke="#5a5a5a" stroke-width="1.1"/>
<line x1="21.20" y1="817.58" x2="24.80" y2="817.58" stroke="#5a5a5a" stroke-width="1.1"/>
<line x1="17.50" y1="835.17" x2="28.00" y2="835.17" stroke="#5a5a5a" stroke-width="1.1"/>
<line x1="21.20" y1="852.77" x2="24.80" y2="852.77" stroke="#5a5a5a" stroke-width="1.1"/>
<line x1="21.20" y1="870.36" x2="24.80" y2="870.36" stroke="#5a5a5a" stroke-width="1.1"/>
<line x1="21.20" y1="887.96" x2="24.80" y2="887.96" stroke="#5a5a5a" stroke-width="1.1"/>
<line x1="21.20" y1="923.14" x2="24.80" y2="923.14" stroke="#5a5a5a" stroke-width="1.1"/>
<line x1="21.20" y1="940.74" x2="24.80" y2="940.74" stroke="#5a5a5a" stroke-width="1.1"/>
<line x1="21.20" y1="958.33" x2="24.80" y2="958.33" stroke="#5a5a5a" stroke-width="1.1"/>
<line x1="17.50" y1="975.92" x2="28.00" y2="975.92" stroke="#5a5a5a" stroke-width="1.1"/>
<line x1="21.20" y1="993.52" x2="24.80" y2="993.52" stroke="#5a5a5a" stroke-width="1.1"/>
<line x1="21.20" y1="1011.11" x2="24.80" y2="1011.11" stroke="#5a5a5a" stroke-width="1.1"/>
<line x1="21.20" y1="1028.71" x2="24.80" y2="1028.71" stroke="#5a5a5a" stroke-width="1.1"/>
<line x1="21.20" y1="1063.89" x2="24.80" y2="1063.89" stroke="#5a5a5a" stroke-width="1.1"/>
<line x1="21.20" y1="1081.49" x2="24.80" y2="1081.49" stroke="#5a5a5a" stroke-width="1.1"/>
<line x1="21.20" y1="1099.08" x2="24.80" y2="1099.08" stroke="#5a5a5a" stroke-width="1.1"/>
<line x1="17.50" y1="1116.67" x2="28.00" y2="1116.67" stroke="#5a5a5a" stroke-width="1.1"/>
<line x1="21.20" y1="1134.27" x2="24.80" y2="1134.27" stroke="#5a5a5a" stroke-width="1.1"/>
<line x1="21.20" y1="1151.86" x2="24.80" y2="1151.86" stroke="#5a5a5a" stroke-width="1.1"/>
<line x1="21.20" y1="1169.46" x2="24.80" y2="1169.46" stroke="#5a5a5a" stroke-width="1.1"/>
<line x1="21.20" y1="1204.64" x2="24.80" y2="1204.64" stroke="#5a5a5a" stroke-width="1.1"/>
<line x1="21.20" y1="1222.24" x2="24.80" y2="1222.24" stroke="#5a5a5a" stroke-width="1.1"/>
<line x1="21.20" y1="1239.83" x2="24.80" y2="1239.83" stroke="#5a5a5a" stroke-width="1.1"/>
<line x1="17.50" y1="1257.42" x2="28.00" y2="1257.42" stroke="#5a5a5a" stroke-width="1.1"/>
<line x1="21.20" y1="1275.02" x2="24.80" y2="1275.02" stroke="#5a5a5a" stroke-width="1.1"/>
<line x1="21.20" y1="1292.61" x2="24.80" y2="1292.61" stroke="#5a5a5a" stroke-width="1.1"/>
<line x1="21.20" y1="1310.21" x2="24.80" y2="1310.21" stroke="#5a5a5a" stroke-width="1.1"/>
<line x1="21.20" y1="1345.39" x2="24.80" y2="1345.39" stroke="#5a5a5a" stroke-width="1.1"/>
<line x1="21.20" y1="1362.99" x2="24.80" y2="1362.99" stroke="#5a5a5a" stroke-width="1.1"/>
<line x1="21.20" y1="1380.58" x2="24.80" y2="1380.58" stroke="#5a5a5a" stroke-width="1.1"/>
<line x1="17.50" y1="1398.17" x2="28.00" y2="1398.17" stroke="#5a5a5a" stroke-width="1.1"/>
<text transform="translate(28 342.6) rotate(-90)" font-size="18.5" fill="#444" text-anchor="middle">1</text>
<text transform="translate(28 624.0) rotate(-90)" font-size="18.5" fill="#444" text-anchor="middle">1</text>
<text transform="translate(28 764.8) rotate(-90)" font-size="18.5" fill="#444" text-anchor="middle">2</text>
<text transform="translate(28 905.5) rotate(-90)" font-size="18.5" fill="#444" text-anchor="middle">3</text>
<text transform="translate(28 1046.3) rotate(-90)" font-size="18.5" fill="#444" text-anchor="middle">4</text>
<text transform="translate(28 1187.0) rotate(-90)" font-size="18.5" fill="#444" text-anchor="middle">5</text>
<text transform="translate(28 1327.8) rotate(-90)" font-size="18.5" fill="#444" text-anchor="middle">6</text>
<polyline points="579.3,495.2 582.6,498.4 586.0,495.2 589.4,498.4 592.7,495.2 596.1,498.4 599.4,495.2 602.8,498.4 606.1,495.2 609.5,498.4 612.8,495.2 616.2,498.4 619.5,495.2 622.9,498.4 626.2,495.2 629.6,498.4 632.9,495.2 636.3,498.4 639.6,495.2 643.0,498.4 646.3,495.2 649.7,498.4 653.0,495.2 656.4,498.4 659.7,495.2 663.1,498.4 666.4,495.2 669.8,498.4 673.1,495.2 676.5,498.4 679.8,495.2 683.2,498.4 686.5,495.2 689.9,498.4 693.2,495.2 696.6,498.4 699.9,495.2" fill="none" stroke="#e23b30" stroke-width="1.05" stroke-linejoin="round"/>
<polyline points="579.3,572.1 582.6,575.3 586.0,572.1 589.4,575.3 592.7,572.1 596.1,575.3 599.4,572.1 602.8,575.3 606.1,572.1 609.5,575.3 612.8,572.1 616.2,575.3 619.5,572.1 622.9,575.3 626.2,572.1 629.6,575.3 632.9,572.1 636.3,575.3 639.6,572.1 643.0,575.3 646.3,572.1 649.7,575.3 653.0,572.1 656.4,575.3 659.7,572.1 663.1,575.3 666.4,572.1 669.8,575.3 673.1,572.1 676.5,575.3" fill="none" stroke="#e23b30" stroke-width="1.05" stroke-linejoin="round"/>
<polyline points="579.3,1054.7 582.6,1057.9 586.0,1054.7 589.4,1057.9 592.7,1054.7 596.1,1057.9 599.4,1054.7 602.8,1057.9 606.1,1054.7 609.5,1057.9 612.8,1054.7" fill="none" stroke="#e23b30" stroke-width="1.05" stroke-linejoin="round"/>
<rect x="814.00" y="453.00" width="141.90" height="90.00" fill="#000"/>
<rect x="920.60" y="542.50" width="105.00" height="44.00" fill="#757171"/>
<rect x="1025.60" y="586.50" width="35.80" height="45.50" fill="#5b9bd5"/>
<rect x="567.92" y="423.93" width="1374.05" height="1.15" fill="#000"/>
<rect x="567.92" y="452.93" width="1374.05" height="1.15" fill="#000"/>
<rect x="567.92" y="541.92" width="1374.05" height="1.15" fill="#000"/>
<rect x="567.92" y="585.92" width="1374.05" height="1.15" fill="#000"/>
<rect x="567.92" y="631.42" width="1374.05" height="1.15" fill="#000"/>
<rect x="567.92" y="674.42" width="1374.05" height="1.15" fill="#000"/>
<rect x="567.92" y="717.42" width="1374.05" height="1.15" fill="#000"/>
<rect x="567.92" y="761.12" width="1374.05" height="1.15" fill="#000"/>
<rect x="567.92" y="803.72" width="1374.05" height="1.15" fill="#000"/>
<rect x="567.92" y="846.92" width="247.15" height="1.15" fill="#000"/>
<rect x="567.92" y="893.72" width="1374.05" height="1.15" fill="#000"/>
<rect x="567.92" y="936.62" width="247.15" height="1.15" fill="#000"/>
<rect x="567.92" y="982.72" width="1374.05" height="1.15" fill="#000"/>
<rect x="567.92" y="1025.33" width="247.15" height="1.15" fill="#000"/>
<rect x="567.92" y="1068.92" width="1374.05" height="1.15" fill="#000"/>
<rect x="567.92" y="1112.02" width="247.15" height="1.15" fill="#000"/>
<rect x="567.92" y="1154.92" width="1374.05" height="1.15" fill="#000"/>
<rect x="567.92" y="1197.72" width="247.15" height="1.15" fill="#000"/>
<rect x="567.92" y="1241.83" width="1374.05" height="1.15" fill="#000"/>
<rect x="567.92" y="1284.92" width="247.15" height="1.15" fill="#000"/>
<rect x="567.92" y="1327.92" width="1374.05" height="1.15" fill="#000"/>
<rect x="567.92" y="423.93" width="1.15" height="905.15" fill="#000"/>
<rect x="813.92" y="423.93" width="1.15" height="905.15" fill="#000"/>
<rect x="849.62" y="452.93" width="1.15" height="876.15" fill="#000"/>
<rect x="884.42" y="452.93" width="1.15" height="876.15" fill="#000"/>
<rect x="920.02" y="452.93" width="1.15" height="876.15" fill="#000"/>
<rect x="954.82" y="423.93" width="1.15" height="905.15" fill="#000"/>
<rect x="990.22" y="452.93" width="1.15" height="876.15" fill="#000"/>
<rect x="1025.02" y="452.93" width="1.15" height="876.15" fill="#000"/>
<rect x="1060.83" y="452.93" width="1.15" height="876.15" fill="#000"/>
<rect x="1095.42" y="423.93" width="1.15" height="905.15" fill="#000"/>
<rect x="1130.83" y="452.93" width="1.15" height="876.15" fill="#000"/>
<rect x="1165.72" y="452.93" width="1.15" height="876.15" fill="#000"/>
<rect x="1201.33" y="452.93" width="1.15" height="876.15" fill="#000"/>
<rect x="1236.12" y="423.93" width="1.15" height="905.15" fill="#000"/>
<rect x="1271.83" y="452.93" width="1.15" height="876.15" fill="#000"/>
<rect x="1306.42" y="452.93" width="1.15" height="876.15" fill="#000"/>
<rect x="1342.02" y="452.93" width="1.15" height="876.15" fill="#000"/>
<rect x="1376.83" y="423.93" width="1.15" height="905.15" fill="#000"/>
<rect x="1412.42" y="452.93" width="1.15" height="876.15" fill="#000"/>
<rect x="1447.42" y="452.93" width="1.15" height="876.15" fill="#000"/>
<rect x="1483.02" y="452.93" width="1.15" height="876.15" fill="#000"/>
<rect x="1518.02" y="423.93" width="1.15" height="905.15" fill="#000"/>
<rect x="1553.02" y="452.93" width="1.15" height="876.15" fill="#000"/>
<rect x="1588.02" y="452.93" width="1.15" height="876.15" fill="#000"/>
<rect x="1623.62" y="452.93" width="1.15" height="876.15" fill="#000"/>
<rect x="1658.22" y="423.93" width="1.15" height="905.15" fill="#000"/>
<rect x="1693.83" y="452.93" width="1.15" height="876.15" fill="#000"/>
<rect x="1728.62" y="452.93" width="1.15" height="876.15" fill="#000"/>
<rect x="1764.22" y="452.93" width="1.15" height="876.15" fill="#000"/>
<rect x="1798.92" y="423.93" width="1.15" height="905.15" fill="#000"/>
<rect x="1834.92" y="452.93" width="1.15" height="876.15" fill="#000"/>
<rect x="1869.33" y="452.93" width="1.15" height="876.15" fill="#000"/>
<rect x="1904.92" y="452.93" width="1.15" height="876.15" fill="#000"/>
<rect x="1940.83" y="423.93" width="1.15" height="905.15" fill="#000"/>
</svg>
</div>
</body></html>
